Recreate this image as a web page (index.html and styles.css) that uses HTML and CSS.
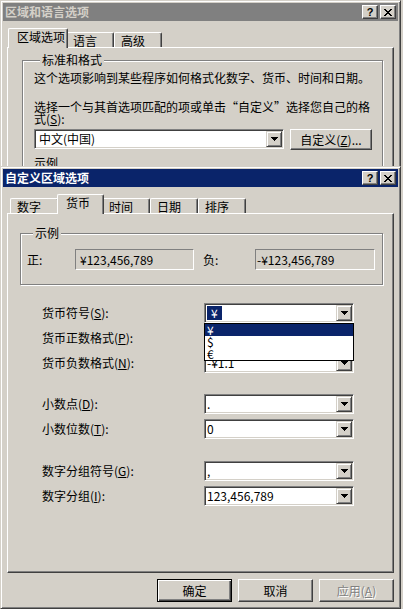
FILE: index.html
```html
<!DOCTYPE html>
<html lang="zh-CN">
<head>
<meta charset="utf-8">
<title>自定义区域选项</title>
<link rel="stylesheet" href="styles.css">
</head>
<body>
<div class="desktop">
  <section class="window window-back">
    <header class="titlebar titlebar-inactive">
      <span class="title">区域和语言选项</span>
      <span class="caption-buttons">
        <span class="cap-btn">?</span>
        <span class="cap-btn"><svg class="close-icon" width="8" height="7" viewBox="0 0 8 7"><path d="M0 0h2v1H0zM6 0h2v1H6zM1 1h2v1H1zM5 1h2v1H5zM2 2h4v1H2zM3 3h2v1H3zM2 4h4v1H2zM1 5h2v1H1zM5 5h2v1H5zM0 6h2v1H0zM6 6h2v1H6z"/></svg></span>
      </span>
    </header>
    <nav class="tabs">
      <span class="tab tab-active tab-w60">区域选项</span>
      <span class="tab tab-w48">语言</span>
      <span class="tab tab-w48">高级</span>
    </nav>
    <div class="panel panel-back">
      <fieldset class="group group-std">
        <legend>标准和格式</legend>
        <p class="text text-desc">这个选项影响到某些程序如何格式化数字、货币、时间和日期。</p>
        <p class="text text-choose">选择一个与其首选项匹配的项或单击“自定义”选择您自己的格<br>式(<u>S</u>):</p>
        <div class="std-row">
          <div class="combo combo-locale">
            <span class="combo-value">中文(中国)</span>
            <span class="drop-btn"><svg class="arrow" width="7" height="4" viewBox="0 0 7 4"><path d="M0 0h7v1H0zM1 1h5v1H1zM2 2h3v1H2zM3 3h1v1H3z"/></svg></span>
          </div>
          <button type="button" class="btn btn-custom">自定义(<u>Z</u>)...</button>
        </div>
        <p class="text text-sample">示例</p>
      </fieldset>
    </div>
  </section>

  <section class="window window-front">
    <header class="titlebar titlebar-active">
      <span class="title">自定义区域选项</span>
      <span class="caption-buttons">
        <span class="cap-btn">?</span>
        <span class="cap-btn"><svg class="close-icon" width="8" height="7" viewBox="0 0 8 7"><path d="M0 0h2v1H0zM6 0h2v1H6zM1 1h2v1H1zM5 1h2v1H5zM2 2h4v1H2zM3 3h2v1H3zM2 4h4v1H2zM1 5h2v1H1zM5 5h2v1H5zM0 6h2v1H0zM6 6h2v1H6z"/></svg></span>
      </span>
    </header>
    <nav class="tabs">
      <span class="tab tab-w49">数字</span>
      <span class="tab tab-active tab-w47">货币</span>
      <span class="tab tab-w48">时间</span>
      <span class="tab tab-w48">日期</span>
      <span class="tab tab-w48">排序</span>
    </nav>
    <div class="panel panel-front">
      <fieldset class="group group-sample">
        <legend>示例</legend>
        <div class="sample-grid">
          <span class="sample-label">正:</span>
          <span class="static-field">¥123,456,789</span>
          <span class="sample-label sample-label-neg">负:</span>
          <span class="static-field static-field-neg">-¥123,456,789</span>
        </div>
      </fieldset>

      <div class="form">
        <div class="form-section">
          <div class="form-row">
            <span class="form-label">货币符号(<u>S</u>):</span>
            <div class="combo">
              <span class="combo-value"><span class="selected-text">¥</span></span>
              <span class="drop-btn"><svg class="arrow" width="7" height="4" viewBox="0 0 7 4"><path d="M0 0h7v1H0zM1 1h5v1H1zM2 2h3v1H2zM3 3h1v1H3z"/></svg></span>
              <ul class="dropdown-list">
                <li class="dropdown-item dropdown-item-active">¥</li>
                <li class="dropdown-item">$</li>
                <li class="dropdown-item">€</li>
              </ul>
            </div>
          </div>
          <div class="form-row">
            <span class="form-label">货币正数格式(<u>P</u>):</span>
            <div class="combo">
              <span class="combo-value">¥1.1</span>
              <span class="drop-btn"><svg class="arrow" width="7" height="4" viewBox="0 0 7 4"><path d="M0 0h7v1H0zM1 1h5v1H1zM2 2h3v1H2zM3 3h1v1H3z"/></svg></span>
            </div>
          </div>
          <div class="form-row">
            <span class="form-label">货币负数格式(<u>N</u>):</span>
            <div class="combo">
              <span class="combo-value">-¥1.1</span>
              <span class="drop-btn"><svg class="arrow" width="7" height="4" viewBox="0 0 7 4"><path d="M0 0h7v1H0zM1 1h5v1H1zM2 2h3v1H2zM3 3h1v1H3z"/></svg></span>
            </div>
          </div>
        </div>

        <div class="form-section form-section-decimal">
          <div class="form-row">
            <span class="form-label">小数点(<u>D</u>):</span>
            <div class="combo">
              <span class="combo-value">.</span>
              <span class="drop-btn"><svg class="arrow" width="7" height="4" viewBox="0 0 7 4"><path d="M0 0h7v1H0zM1 1h5v1H1zM2 2h3v1H2zM3 3h1v1H3z"/></svg></span>
            </div>
          </div>
          <div class="form-row">
            <span class="form-label">小数位数(<u>T</u>):</span>
            <div class="combo">
              <span class="combo-value">0</span>
              <span class="drop-btn"><svg class="arrow" width="7" height="4" viewBox="0 0 7 4"><path d="M0 0h7v1H0zM1 1h5v1H1zM2 2h3v1H2zM3 3h1v1H3z"/></svg></span>
            </div>
          </div>
        </div>

        <div class="form-section form-section-group">
          <div class="form-row">
            <span class="form-label">数字分组符号(<u>G</u>):</span>
            <div class="combo">
              <span class="combo-value">,</span>
              <span class="drop-btn"><svg class="arrow" width="7" height="4" viewBox="0 0 7 4"><path d="M0 0h7v1H0zM1 1h5v1H1zM2 2h3v1H2zM3 3h1v1H3z"/></svg></span>
            </div>
          </div>
          <div class="form-row">
            <span class="form-label">数字分组(<u>I</u>):</span>
            <div class="combo">
              <span class="combo-value">123,456,789</span>
              <span class="drop-btn"><svg class="arrow" width="7" height="4" viewBox="0 0 7 4"><path d="M0 0h7v1H0zM1 1h5v1H1zM2 2h3v1H2zM3 3h1v1H3z"/></svg></span>
            </div>
          </div>
        </div>
      </div>
    </div>
    <footer class="button-row">
      <button type="button" class="btn btn-default">确定</button>
      <button type="button" class="btn">取消</button>
      <button type="button" class="btn btn-disabled">应用(<u>A</u>)</button>
    </footer>
  </section>
</div>
</body>
</html>
```

FILE: styles.css
```css
* { box-sizing: border-box; }

html, body { margin: 0; padding: 0; }

body {
  width: 403px;
  height: 609px;
  overflow: hidden;
  background: #d4d0c8;
  font-family: "Noto Sans CJK SC", "Liberation Sans", sans-serif;
  font-size: 12px;
  line-height: 14px;
  color: #000;
}

.desktop {
  position: relative;
  width: 403px;
  height: 609px;
}

/* ---------- window frame ---------- */
.window {
  position: absolute;
  left: 0;
  width: 401px;
  display: flex;
  flex-direction: column;
  padding: 2px;
  background: #d4d0c8;
  border: 1px solid;
  border-color: #d4d0c8 #404040 #404040 #d4d0c8;
  box-shadow: inset 1px 1px #fff, inset -1px -1px #808080;
}

.window-back { top: 0; height: 440px; }
.window-front { top: 166px; height: 443px; z-index: 2; }

.titlebar {
  flex: none;
  display: flex;
  align-items: center;
  justify-content: space-between;
  height: 18px;
  padding: 0 2px;
}

.titlebar-inactive { background: #808080; color: #d4d0c8; }
.titlebar-active { background: #0a246a; color: #fff; }

.title {
  font-weight: bold;
  line-height: 14px;
  white-space: nowrap;
}

.caption-buttons {
  display: flex;
  gap: 2px;
}

.cap-btn {
  width: 16px;
  height: 14px;
  display: flex;
  align-items: center;
  justify-content: center;
  background: #d4d0c8;
  color: #000;
  border: 1px solid;
  border-color: #fff #404040 #404040 #fff;
  box-shadow: inset -1px -1px #808080;
  font: bold 11px/12px "Liberation Sans", sans-serif;
}

.close-icon { display: block; fill: #000; shape-rendering: crispEdges; }

/* ---------- tabs ---------- */
.tabs {
  flex: none;
  display: flex;
  align-items: flex-end;
  margin-top: 7px;
  padding-left: 7px;
}

.tab {
  height: 15px;
  padding: 1px 0 0 6px;
  background: #d4d0c8;
  border: 1px solid #fff;
  border-bottom: none;
  border-right-color: #404040;
  border-radius: 2px 2px 0 0;
  box-shadow: inset -1px 0 #808080;
  white-space: nowrap;
  line-height: 14px;
}

.tab-active {
  position: relative;
  z-index: 1;
  height: 20px;
  margin: 0 -2px -1px;
  padding-left: 8px;
}

.tab-w47 { width: 47px; }
.tab-w48 { width: 48px; }
.tab-w49 { width: 49px; }
.tab-w60 { width: 60px; }

/* ---------- tab panel ---------- */
.panel {
  flex: none;
  margin: 0 4px;
  border: 1px solid;
  border-color: #fff #404040 #404040 #fff;
  box-shadow: inset -1px -1px #808080;
}

.panel-back { height: 380px; padding: 5px 0 0 14px; }
.panel-front { height: 360px; padding: 12px 0 0 12px; }

/* ---------- group box ---------- */
.group {
  margin: 0;
  padding: 0;
  min-width: 0;
  border: 1px solid #808080;
  box-shadow: inset 1px 1px #fff, 1px 1px #fff;
}

.group legend {
  margin-left: 6px;
  padding: 0 2px;
  line-height: 14px;
  background: #d4d0c8;
}

.group-std {
  width: 361px;
  height: 200px;
  padding: 0 0 0 11px;
}

.text {
  margin: 0;
  white-space: nowrap;
  line-height: 12px;
}

.text-desc { margin-top: 5px; }
.text-choose { margin-top: 17px; }
.text-sample { margin-top: 7px; }

.std-row {
  display: flex;
  align-items: flex-start;
  gap: 6px;
  margin-top: 4px;
}

.group-sample {
  width: 363px;
  padding: 9px 0 14px 6px;
}

.sample-grid {
  display: grid;
  grid-template-columns: 48px 119px 61px 120px;
  align-items: center;
}

.sample-label { white-space: nowrap; }
.sample-label-neg { padding-left: 9px; }

.static-field {
  height: 21px;
  padding-left: 4px;
  line-height: 19px;
  white-space: nowrap;
  border: 1px solid;
  border-color: #808080 #fff #fff #808080;
}

.static-field-neg { padding-left: 1px; }

/* ---------- form rows ---------- */
.form {
  margin: 18px 0 0 22px;
}

.form-section-decimal { margin-top: 21px; }
.form-section-group { margin-top: 22px; }

.form-row {
  display: flex;
  align-items: center;
  height: 20px;
}

.form-row + .form-row { margin-top: 5px; }

.form-label {
  width: 162px;
  flex: none;
  white-space: nowrap;
}

/* ---------- combo box ---------- */
.combo {
  position: relative;
  flex: none;
  display: flex;
  align-items: center;
  width: 150px;
  height: 20px;
  padding: 1px;
  background: #fff;
  border: 1px solid;
  border-color: #808080 #fff #fff #808080;
  box-shadow: inset 1px 1px #404040, inset -1px -1px #d4d0c8;
}

.combo-locale { width: 250px; }

.combo-value {
  flex: 1;
  min-width: 0;
  padding-left: 1px;
  white-space: nowrap;
  line-height: 14px;
}

.combo-locale .combo-value { padding-left: 3px; }

.selected-text {
  display: inline-block;
  padding: 0 4px;
  background: #0a246a;
  color: #fff;
  line-height: 14px;
}

.drop-btn {
  flex: none;
  width: 16px;
  height: 16px;
  display: flex;
  align-items: center;
  justify-content: center;
  background: #d4d0c8;
  border: 1px solid;
  border-color: #d4d0c8 #404040 #404040 #d4d0c8;
  box-shadow: inset 1px 1px #fff, inset -1px -1px #808080;
}

.arrow { display: block; fill: #000; shape-rendering: crispEdges; }

.dropdown-list {
  position: absolute;
  left: -1px;
  top: 19px;
  z-index: 5;
  width: 150px;
  margin: 0;
  padding: 0;
  list-style: none;
  background: #fff;
  border: 1px solid #000;
}

.dropdown-item {
  height: 12px;
  padding-left: 2px;
  line-height: 12px;
}

.dropdown-item-active {
  background: #0a246a;
  color: #fff;
}

/* ---------- push buttons ---------- */
.btn {
  display: flex;
  align-items: center;
  justify-content: center;
  width: 75px;
  height: 23px;
  margin: 0;
  padding: 0;
  font: inherit;
  line-height: 14px;
  color: #000;
  background: #d4d0c8;
  border: 1px solid;
  border-color: #fff #404040 #404040 #fff;
  box-shadow: inset -1px -1px #808080;
  white-space: nowrap;
}

.btn-custom { width: 82px; height: 21px; }

.btn-default {
  border-color: #000;
  box-shadow: inset 1px 1px #fff, inset -1px -1px #404040, inset -2px -2px #808080;
}

.btn-disabled {
  color: #808080;
  text-shadow: 1px 1px #fff;
}

.button-row {
  flex: none;
  display: flex;
  justify-content: flex-end;
  gap: 6px;
  margin: 6px 4px 0 0;
}
```
